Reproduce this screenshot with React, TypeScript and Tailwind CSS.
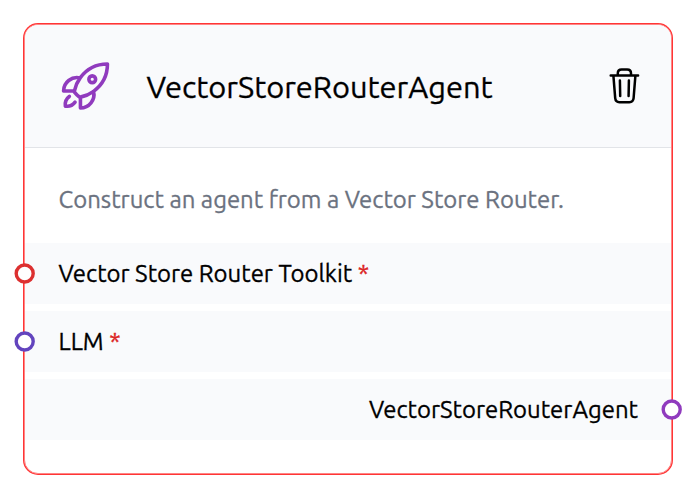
import React from "react";

function RocketIcon() {
  return (
    <svg className="h-[54px] w-[55px] shrink-0 text-[#903bbe]" viewBox="0 0 24 24" fill="none" stroke="currentColor" strokeWidth={1.6} strokeLinecap="round" strokeLinejoin="round">
      <path d="M15.59 14.37a6 6 0 01-5.84 7.38v-4.8m5.84-2.58a14.98 14.98 0 006.16-12.12A14.98 14.98 0 009.631 8.41m5.96 5.96a14.926 14.926 0 01-5.841 2.58m-.119-8.54a6 6 0 00-7.381 5.84h4.8m2.581-5.84a14.927 14.927 0 00-2.58 5.84m2.699 2.7c-.103.021-.207.041-.311.06a15.09 15.09 0 01-2.448-2.448 14.9 14.9 0 01.06-.312m-2.24 2.39a4.493 4.493 0 00-1.757 4.306 4.493 4.493 0 004.306-1.758M16.5 9a1.5 1.5 0 11-3 0 1.5 1.5 0 013 0z" />
    </svg>
  );
}

function TrashIcon() {
  return (
    <svg className="h-10 w-8 shrink-0 text-black" viewBox="0 0 32 40" fill="none" stroke="currentColor" strokeWidth={2.5} strokeLinecap="round" strokeLinejoin="round">
      <path d="M2.7 9.4H30.1M5.4 9.6L7.2 32.2Q7.6 36.2 11.4 36.2H21.4Q25.2 36.2 25.6 32.2L27.4 9.6" />
      <path d="M9.8 8.8V7.2Q9.8 3.4 13.6 3.4H19.2Q23 3.4 23 7.2V8.8" />
      <path d="M11.9 14.4L12.2 30M20.9 14.4L20.6 30" />
    </svg>
  );
}

function Handle({ className }: { className: string }) {
  return (
    <svg className={`absolute h-[21px] w-[21px] ${className}`} viewBox="0 0 21 21" fill="white" stroke="currentColor" strokeWidth={3.4}>
      <circle cx="10.7" cy="10.5" r="8.5" />
    </svg>
  );
}

function Input({ label, handle }: { label: string; handle: string }) {
  return (
    <div className="relative flex h-[61px] items-center gap-[5.5px] bg-[#f9fafc] pl-[33.5px] text-[23.95px] whitespace-nowrap">
      <Handle className={`-left-[11px] ${handle}`} />
      <span>{label}</span>
      <span className="text-[#dc2626]">*</span>
    </div>
  );
}

export default function App() {
  return (
    <main className="h-[495px] w-[700px] overflow-hidden bg-white pt-[24px] pl-[24px] font-['Ubuntu','Noto_Sans',sans-serif] text-black [-webkit-text-stroke:0.3px]">
      <section className="h-[450px] w-[648px] rounded-[14px] border border-[#ff8585] bg-white shadow-[0_0_0_1px_#ff3535]">
        <header className="flex h-[123px] items-center rounded-t-[13px] border-b border-[#e2e4e8] bg-[#f9fafc] pr-[31px] pl-[33px]">
          <RocketIcon />
          <h1 className="mt-[2px] ml-[33.5px] text-[30.8px] leading-none whitespace-nowrap">VectorStoreRouterAgent</h1>
          <button className="ml-auto" aria-label="Delete"><TrashIcon /></button>
        </header>
        <p className="flex h-[95px] items-center pt-[8px] pl-[33.5px] text-[23.95px] whitespace-nowrap text-[#6b7280]">Construct an agent from a Vector Store Router.</p>
        <div className="flex flex-col gap-[7px]">
          <Input label="Vector Store Router Toolkit" handle="top-[20px] text-[#dc3030]" />
          <Input label="LLM" handle="top-[20px] text-[#6344be]" />
          <div className="relative flex h-[61px] items-center justify-end bg-[#f9fafc] pr-[33px] text-[23.95px] whitespace-nowrap">
            <span>VectorStoreRouterAgent</span>
            <Handle className="top-[20px] -right-[11px] text-[#903bbe]" />
          </div>
        </div>
      </section>
    </main>
  );
}
